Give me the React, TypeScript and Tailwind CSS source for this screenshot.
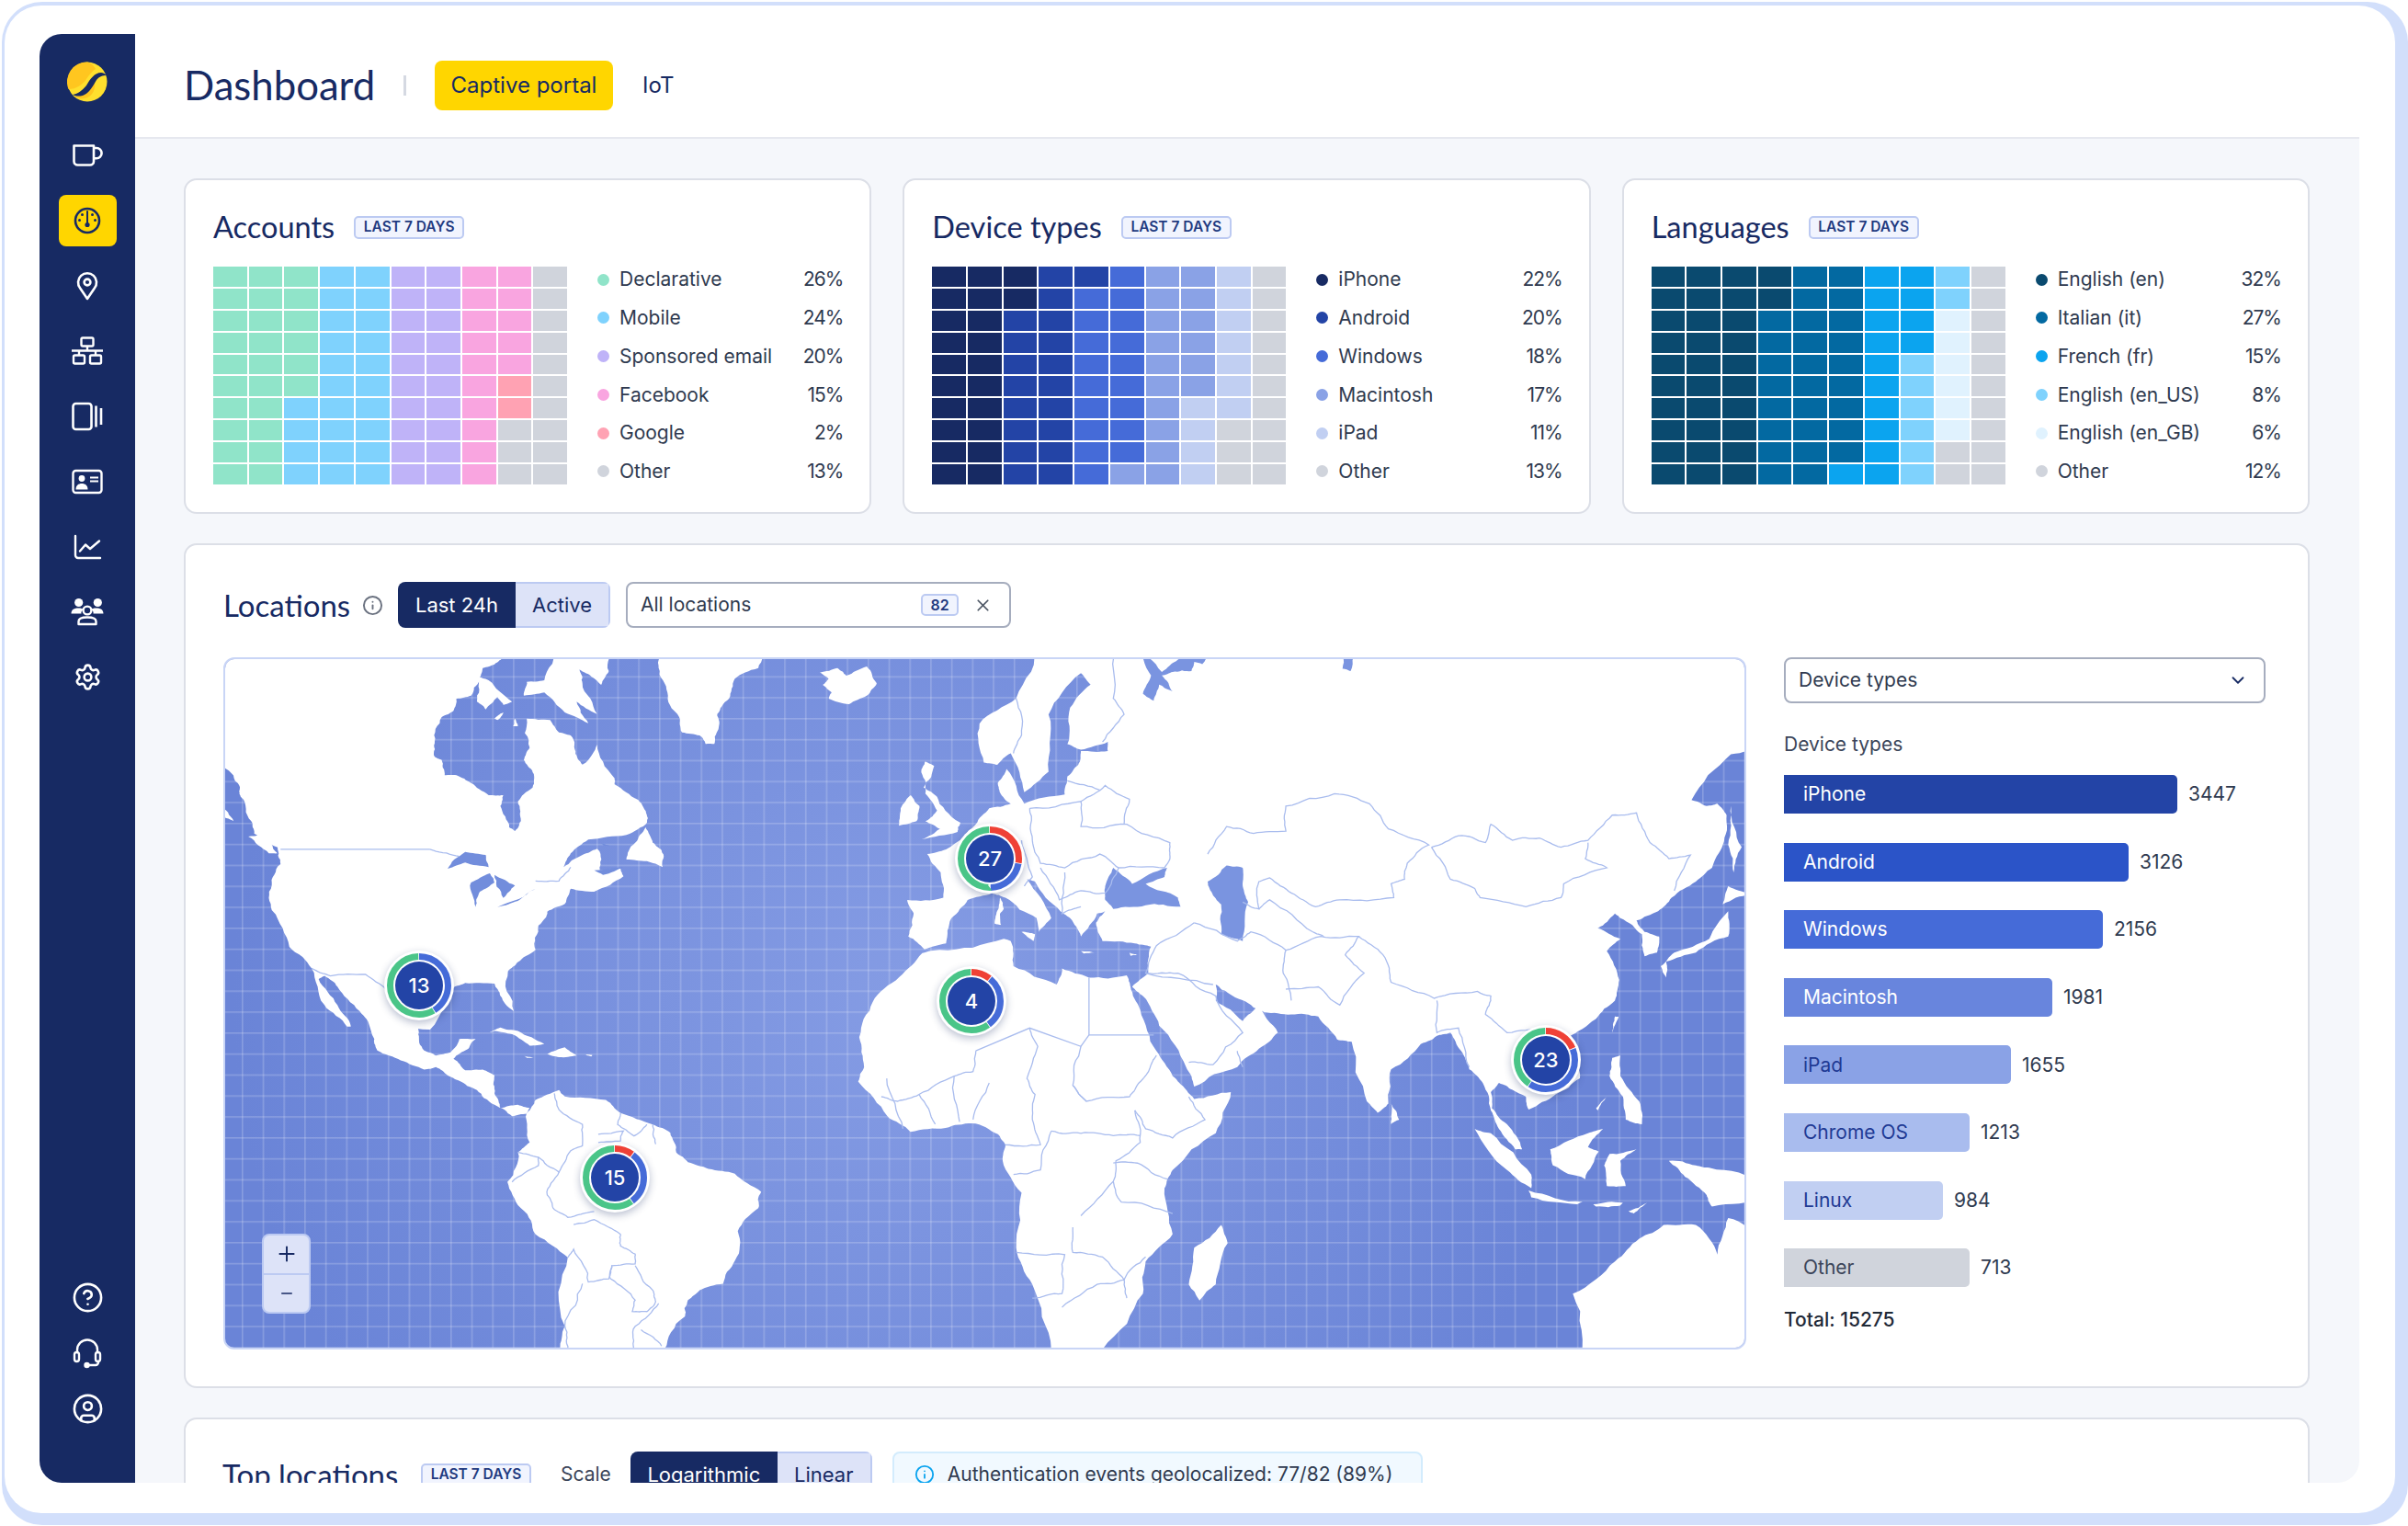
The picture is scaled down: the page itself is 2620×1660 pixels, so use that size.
import { ChevronDown, CircleHelp, CircleUser, Info, Minus, Plus, Settings, X } from "lucide-react";

type Run = [string, number];

const HEADING = "font-['Lato',sans-serif]";

function cells(runs: Run[]) {
  return runs.flatMap(([color, count]) => Array.from({ length: count }, () => color));
}

const accounts = {
  title: "Accounts",
  runs: [
    ["bg-[#90e4c9]", 26],
    ["bg-[#7fd2fd]", 24],
    ["bg-[#bfb3f8]", 20],
    ["bg-[#f9a5e0]", 15],
    ["bg-[#ffa2b3]", 2],
    ["bg-[#d0d4dc]", 13],
  ] as Run[],
  legend: [
    ["Declarative", "26%", "bg-[#90e4c9]"],
    ["Mobile", "24%", "bg-[#7fd2fd]"],
    ["Sponsored email", "20%", "bg-[#bfb3f8]"],
    ["Facebook", "15%", "bg-[#f9a5e0]"],
    ["Google", "2%", "bg-[#ffa2b3]"],
    ["Other", "13%", "bg-[#d0d4dc]"],
  ],
};

const deviceTypes = {
  title: "Device types",
  runs: [
    ["bg-[#172a63]", 22],
    ["bg-[#2344a6]", 19],
    ["bg-[#456bd8]", 18],
    ["bg-[#8aa2e6]", 17],
    ["bg-[#c1cff2]", 11],
    ["bg-[#d0d4dc]", 13],
  ] as Run[],
  legend: [
    ["iPhone", "22%", "bg-[#172a63]"],
    ["Android", "20%", "bg-[#2344a6]"],
    ["Windows", "18%", "bg-[#456bd8]"],
    ["Macintosh", "17%", "bg-[#8aa2e6]"],
    ["iPad", "11%", "bg-[#c1cff2]"],
    ["Other", "13%", "bg-[#d0d4dc]"],
  ],
};

const languages = {
  title: "Languages",
  runs: [
    ["bg-[#0a4a6f]", 32],
    ["bg-[#0369a1]", 27],
    ["bg-[#0ba4ef]", 15],
    ["bg-[#7fd2fd]", 8],
    ["bg-[#e0f2fe]", 6],
    ["bg-[#d0d4dc]", 12],
  ] as Run[],
  legend: [
    ["English (en)", "32%", "bg-[#0a4a6f]"],
    ["Italian (it)", "27%", "bg-[#0369a1]"],
    ["French (fr)", "15%", "bg-[#0ba4ef]"],
    ["English (en_US)", "8%", "bg-[#7fd2fd]"],
    ["English (en_GB)", "6%", "bg-[#e0f2fe]"],
    ["Other", "12%", "bg-[#d0d4dc]"],
  ],
};

const bars = [
  { name: "iPhone", value: 3447, cls: "w-[428px] bg-[#2344a6] text-white" },
  { name: "Android", value: 3126, cls: "w-[375px] bg-[#2b54c8] text-white" },
  { name: "Windows", value: 2156, cls: "w-[347px] bg-[#456bd8] text-white" },
  { name: "Macintosh", value: 1981, cls: "w-[292px] bg-[#6885dd] text-white" },
  { name: "iPad", value: 1655, cls: "w-[247px] bg-[#8aa2e6] text-[#1f3a94]" },
  { name: "Chrome OS", value: 1213, cls: "w-[202px] bg-[#a9bcee] text-[#1f3a94]" },
  { name: "Linux", value: 984, cls: "w-[173px] bg-[#c1cff2] text-[#1f3a94]" },
  { name: "Other", value: 713, cls: "w-[202px] bg-[#d0d4dc] text-[#3b4559]" },
];

// land traced over three crops of the map, each with its own scale
const z3Land = [
  "20,300 560,300 548,345 530,368 510,380 505,420 490,470 465,480 460,520 440,540 428,620 428,670 440,680 445,730 465,730 490,755 520,795 545,795 540,830 555,900 565,912 575,880 570,815 595,770 595,720 580,680 590,640 585,545 625,550 640,590 660,600 668,660 680,695 705,630 735,740 735,760 775,810 790,860 790,885 755,925 690,940 660,985 648,1030 680,990 705,970 710,1040 745,1035 750,1060 700,1110 660,1100 650,1150 620,1175 605,1220 600,1300 570,1340 553,1370 563,1500 540,1450 530,1410 480,1408 462,1420 420,1560 320,1560 300,1500 262,1420 240,1385 230,1395 262,1480 285,1550 278,1550 240,1480 218,1360 180,1290 150,1170 150,1090 165,1020 160,965 120,920 115,880 97,800 95,765 67,700 20,680",
  "60,825 85,880 60,860",
  "110,930 130,925 160,985 145,985",
  "505,410 520,420 560,490 545,500 535,475 515,515 500,490",
  "530,545 545,525 535,550",
  "565,545 570,570 562,570",
  "630,310 735,310 725,390 712,435 690,400 675,385 680,430 705,530 670,490 690,560 650,525 615,460 580,470 585,425 615,420",
  "805,310 1005,310 980,380 940,415 930,480 910,530 912,580 905,628 890,628 880,600 850,590 845,540 825,460 810,380",
  "1085,395 1115,380 1130,405 1165,375 1182,430 1165,470 1135,498 1100,480 1105,460 1090,435 1100,415",
  "788,900 800,950 815,975 817,1030 790,1010 755,1005 770,950",
  "1265,685 1280,700 1262,770 1285,800 1325,885 1320,915 1258,940 1290,905 1265,880 1285,845 1265,790 1258,720",
  "1240,795 1255,830 1250,880 1220,895 1225,830",
];

const z3Lakes = [
  "450,1035 480,980 515,990 520,1030 480,1015",
  "490,1080 522,1050 530,1080 505,1110 498,1160",
  "530,1055 565,1090 545,1130",
  "535,1160 600,1100 570,1140",
  "710,950 732,962 716,960",
  "700,1040 750,1030 715,1055",
];

const z3Lines = [
  "600,1075 640,1075 660,1030",
  "218,1360 250,1385 310,1380 345,1430",
];

const z7Land = [
  "300,-20 400,-20 395,30 400,70 410,120 430,135 455,125 470,85 498,85 485,115 460,145 480,180 510,178 530,195 530,250 540,295 570,285 590,295 585,312 560,320 530,285 500,240 470,212 450,195 430,170 410,178 370,150 330,120 325,85",
  "520,65 540,50 570,60 615,100 590,105 560,70 530,60",
  "620,130 650,110 670,135 640,140",
  "685,132 697,134 695,138",
  "580,135 597,142 585,142",
  "585,310 600,270 640,240 650,260 720,270 745,310 800,345 830,370 840,430 860,460 895,480 940,495 985,550 980,600 945,670 940,760 920,830 880,850 860,880 855,930 820,1030 815,1070 642,1070 642,1030 650,960 655,750 600,680 575,600 552,520 570,430 590,400",
];

const z7Lines = [
  "632,250 640,300 680,345 680,410 660,425 640,490 605,445 570,430",
  "745,310 740,345 768,380 790,345",
  "707,375 750,365 745,395 707,400",
  "800,345 805,405",
  "605,445 605,470 560,520",
  "640,490 620,560 630,600 655,628 700,610",
  "665,650 700,635 745,680 745,715 770,740 770,770 730,775 725,815 690,825 665,725 655,750",
  "730,775 728,815 770,880 765,915 790,915 805,885 800,850 770,775",
  "680,830 650,960 655,1030",
  "810,890 770,960 768,1030",
  "780,970 815,1020",
];

const z8Land = [
  "225,0 1570,0 1570,235 1505,242 1432,342 1460,355 1480,350 1497,375 1490,440 1470,490 1440,520 1395,555 1370,585 1330,605 1345,630 1372,640 1368,675 1345,683 1340,635 1300,600 1290,590 1258,622 1300,645 1275,672 1298,735 1290,780 1255,820 1225,845 1195,870 1225,895 1225,950 1180,985 1130,1018 1125,990 1100,975 1075,960 1060,980 1062,1015 1090,1050 1118,1105 1105,1105 1075,1060 1060,1020 1045,960 1020,930 1005,890 985,850 965,855 930,875 875,930 870,1005 850,1025 830,1000 802,870 775,865 740,815 690,810 640,805 620,795 575,765 550,745 550,780 600,825 630,790 665,850 630,885 590,925 510,968 495,925 445,835 415,770 395,750 425,720 430,662 400,655 340,650 328,610 345,585 330,590 300,640 280,600 262,585 215,520 200,515 245,600 222,630 218,600 160,555 135,545 90,560 60,600 50,655 10,668 -20,640 -10,590 -22,560 45,555 40,500 15,460 50,450 105,395 130,360 170,350 152,330 146,304 162,274 195,350 270,330 275,290 295,265 300,235 350,235 350,215 300,232 275,220 280,140 318,90 300,65 240,155 240,280 195,325 170,240 145,265 120,260 112,175 180,120",
  "-111,860 -102,925 -113,957 -59,1032 -16,1067 49,1058 98,1048 146,1072 160,1095 155,1130 190,1200 180,1320 210,1400 245,1542 255,1580 335,1580 340,1542 415,1420 420,1350 470,1290 455,1190 470,1150 550,1070 578,980 510,995 495,975 470,945 440,890 410,800 392,750 385,725 315,730 265,710 255,745 175,705 170,650 157,645 38,669 6,676 -37,729 -86,783",
  "560,1270 572,1310 550,1400 520,1435 500,1400 510,1320",
  "1240,1580 1212,1420 1290,1350 1335,1300 1380,1270 1440,1270 1480,1335 1500,1255 1570,1290 1570,1580",
  "1390,1130 1440,1140 1465,1145 1570,1180 1570,1210 1470,1230 1460,1205 1420,1165",
  "1030,1060 1060,1070 1135,1160 1135,1190 1090,1150",
  "1130,1195 1230,1220 1220,1225 1135,1210",
  "1250,1225 1305,1222 1300,1228 1255,1230",
  "1315,1240 1350,1222 1325,1245",
  "1170,1105 1240,1070 1268,1060 1240,1100 1260,1110 1235,1170 1175,1140",
  "1280,1115 1330,1105 1300,1130 1310,1185 1275,1185 1270,1140",
  "1285,905 1300,900 1300,945 1335,1000 1340,1050 1310,1040 1305,990 1280,945",
  "1255,1015 1275,990 1258,1020",
  "1290,815 1297,815 1285,850",
  "875,1005 890,1040 875,1050",
  "1500,585 1500,640 1440,675 1385,695 1385,730 1375,705 1400,675 1465,645",
  "1500,530 1540,545 1490,570",
  "1505,355 1525,445 1510,500 1500,440",
  "150,555 157,580 150,590 152,615 140,612 147,580",
  "190,630 215,635 212,650",
  "300,672 325,675 305,677",
  "390,675 405,680 392,682",
];

const z8Seas = [
  "360,490 395,525 460,490 455,510 420,525 480,555 485,575 420,572 360,580 345,560 345,530",
  "535,520 570,485 600,490 600,530 610,565 600,650 560,635 560,570 545,550",
  "400,0 450,62 480,35 510,0 550,0 525,45 510,40 505,60 470,62 450,70 470,105 445,90 435,125 415,110 430,70",
  "785,55 800,60 815,0 790,0",
];

const z8Lines = [
  "950,445 1000,420 1050,435 1060,395 1100,430 1150,425 1190,445 1240,430 1285,375 1330,370 1355,435 1390,470 1430,462 1400,540",
  "950,445 985,515 1030,535 1040,555 1125,575 1190,555 1195,525 1275,490 1235,470 1240,435",
  "535,460 570,400 620,415 680,410 680,355 770,328 835,350 870,405 945,440 905,480 900,515 875,525 880,555 780,560 735,575 690,545 650,512 630,520 630,580 600,565",
  "630,580 650,560 730,630 750,640",
  "510,610 590,650 615,630 680,670 675,720 690,780",
  "680,670 745,640 815,640 790,680 825,720 780,790 740,750 680,755",
  "815,640 860,680 875,740 955,775 1035,760 1060,770 1050,810 1090,850 1160,840",
  "960,780 960,850 1000,840 1020,925",
  "510,610 440,660 420,720 545,745",
  "420,720 480,720 550,770 600,850 545,920 500,915",
  "590,890 600,925",
  "205,360 300,345 300,400 385,395 465,435 465,470 455,490 370,490 335,460 270,490 225,480 210,430 205,360",
  "380,395 390,340 345,310 300,345",
  "275,300 335,320",
  "365,0 360,120 380,155 340,215",
  "180,120 190,200 175,240",
  "225,490 260,560 300,540 345,545 370,490",
  "270,500 265,590 300,575",
  "190,430 210,510 195,530",
  "300,880 285,965 310,1000",
  "105,890 100,935 65,945 0,985 -40,1000 -70,990",
  "205,840 220,880 200,950 215,985 210,1040 225,1095 160,1095",
  "285,965 310,1000 390,990 400,975 430,920 440,900",
  "400,1020 420,1060 470,1080 530,1040 500,990",
  "400,1020 410,1090 365,1130 360,1175 300,1250",
  "245,1065 225,1150 175,1160",
  "245,1065 300,1070 360,1075 410,1075",
  "360,1135 405,1135 460,1170",
  "360,1175 375,1220 470,1245",
  "180,1330 270,1335 265,1420 210,1430",
  "285,1275 285,1330 340,1340 380,1390 420,1340",
  "265,1450 330,1400 380,1390 385,1430",
  "0,985 30,1050",
  "65,945 75,1045",
  "130,960 100,1040",
  "-60,950 -30,1060",
];

// these borders run dead straight in the picture
const z8Straight = ["105,890 205,840 300,880 315,855 315,730", "315,855 435,855"];

// breaks up the straight edges so coasts and borders read as traced
function rough(points: string, closed: boolean) {
  let pts = points.split(" ").map((p) => p.split(",").map(Number));
  for (let pass = 0; pass < 3; pass++) {
    const next: number[][] = [];
    pts.forEach((a, i) => {
      next.push(a);
      const b = pts[i + 1] ?? (closed ? pts[0] : null);
      if (!b) return;
      const dx = b[0] - a[0];
      const dy = b[1] - a[1];
      const seed = Math.sin((a[0] + b[0]) * 12.9898 + (a[1] + b[1]) * 78.233) * 43758.5453;
      const k = (seed - Math.floor(seed) - 0.5) * 0.14;
      next.push([(a[0] + b[0]) / 2 - dy * k, (a[1] + b[1]) / 2 + dx * k]);
    });
    pts = next;
  }
  return pts.map((p) => `${p[0].toFixed(1)},${p[1].toFixed(1)}`).join(" ");
}

const markers = [
  { label: 27, cls: "left-[794px] top-[179px]", red: 100, blue: 180 },
  { label: 13, cls: "left-[173px] top-[317px]", red: 0, blue: 150 },
  { label: 4, cls: "left-[774px] top-[334px]", red: 40, blue: 145 },
  { label: 23, cls: "left-[1399px] top-[398px]", red: 68, blue: 215 },
  { label: 15, cls: "left-[386px] top-[526px]", red: 38, blue: 145 },
];

function Arc({ from, to, color }: { from: number; to: number; color: string }) {
  if (to <= from) return null;
  return (
    <circle
      cx="38"
      cy="38"
      r="31.5"
      fill="none"
      stroke={color}
      strokeWidth="7"
      pathLength={360}
      strokeDasharray={`${to - from - 1.5} 360`}
      strokeDashoffset={-from}
      transform="rotate(-90 38 38)"
    />
  );
}

function Marker({ label, cls, red, blue }: { label: number; cls: string; red: number; blue: number }) {
  return (
    <div className={`absolute flex h-[76px] w-[76px] items-center justify-center rounded-full bg-white shadow-[0_3px_8px_rgba(23,42,99,0.3)] ${cls}`}>
      <svg viewBox="0 0 76 76" className="absolute inset-0 h-full w-full">
        <Arc from={0} to={red} color="#ef4136" />
        <Arc from={red} to={blue} color="#456bd8" />
        <Arc from={blue} to={360} color="#4ac588" />
        <circle cx="38" cy="38" r="26" fill="#2344a6" />
      </svg>
      <span className="relative text-[22px] font-medium text-white">{label}</span>
    </div>
  );
}

function BorderLines({ items, straight }: { items: string[]; straight?: boolean }) {
  return (
    <>
      {items.map((p) => (
        <polyline
          key={p}
          points={straight ? p : rough(p, false)}
          fill="none"
          stroke="#a9bcee"
          strokeWidth="1.3"
          vectorEffect="non-scaling-stroke"
        />
      ))}
    </>
  );
}

function Shapes({ items, fill }: { items: string[]; fill: string }) {
  return (
    <>
      {items.map((p) => (
        <polygon key={p} points={rough(p, true)} fill={fill} />
      ))}
    </>
  );
}

function WorldMap() {
  return (
    <svg viewBox="245 717 1653 749" className="block h-full w-full">
      <defs>
        <pattern id="grid" x="263" y="1123" width="22.7" height="22.8" patternUnits="userSpaceOnUse">
          <rect width="1.6" height="22.8" fill="#ffffff" fillOpacity="0.2" />
          <rect width="22.7" height="1.6" fill="#ffffff" fillOpacity="0.2" />
        </pattern>
      </defs>
      <rect x="245" y="717" width="1653" height="749" fill="url(#grid)" />
      <g transform="translate(200 600) scale(0.6378 0.3333)">
        <Shapes items={z3Land} fill="#ffffff" />
        <Shapes items={z3Lakes} fill="#728ddc" />
        <BorderLines items={z3Lines} />
        <BorderLines items={["165,972 420,972"]} straight />
        <BorderLines items={["420,972 425,975 470,995"]} />
      </g>
      <g transform="translate(200 1100) scale(0.6378 0.3571)">
        <Shapes items={z7Land} fill="#ffffff" />
        <BorderLines items={z7Lines} />
      </g>
      <g transform="translate(1000 700) scale(0.5869 0.498)">
        <Shapes items={z8Land} fill="#ffffff" />
        <Shapes items={z8Seas} fill="#7a94e0" />
        <BorderLines items={z8Lines} />
        <BorderLines items={z8Straight} straight />
      </g>
    </svg>
  );
}

function Logo() {
  return (
    <svg viewBox="0 0 44 44" className="h-[44px] w-[44px]">
      <circle cx="22" cy="22" r="21.5" fill="#ffe02e" />
      <path d="M22 .5 A21.5 21.5 0 0 0 1.5 30 C10 30 17 25 21 19 C24 14 28 10 31 8 C28 3 25 1 22 .5 Z" fill="#ffc61f" />
      <path d="M8 38 C17 43 28 40 30 28 C30.5 24 30 22 29 20 C26 26 22 33 16 36 Z" fill="#ffc61f" />
      <path d="M6 36 C12 35 17 31 21 26 C25 19 30 12 37 12 C39 12 41 13 43 15 C39 15 35 16 32 20 C29 25 25 33 19 36 C15 38 10 38 6 36 Z" fill="#172a63" />
    </svg>
  );
}

function MugIcon() {
  return (
    <svg viewBox="0 0 36 36" fill="none" stroke="white" strokeWidth="2.6" strokeLinejoin="round" className="h-9 w-9">
      <path d="M3.5 7.5 H25 V24.5 a4 4 0 0 1-4 4 H7.5 a4 4 0 0 1-4-4 Z" />
      <path d="M25 10 h3 a5.6 5.6 0 0 1 0 11.2 h-3" />
    </svg>
  );
}

function GaugeIcon() {
  return (
    <svg viewBox="0 0 36 36" className="h-9 w-9">
      <circle cx="18" cy="18" r="13" fill="none" stroke="#172a63" strokeWidth="2.6" />
      <path d="M18 8 V21" stroke="#172a63" strokeWidth="2" strokeLinecap="round" />
      <circle cx="18" cy="22.5" r="2.6" fill="#172a63" />
      <circle cx="12.5" cy="11.5" r="1.5" fill="#172a63" />
      <circle cx="23.5" cy="11.5" r="1.5" fill="#172a63" />
      <circle cx="9.5" cy="17.5" r="1.5" fill="#172a63" />
      <circle cx="26.5" cy="17.5" r="1.5" fill="#172a63" />
    </svg>
  );
}

function PinIcon() {
  return (
    <svg viewBox="0 0 36 36" fill="none" stroke="white" strokeWidth="2.6" strokeLinejoin="round" className="h-9 w-9">
      <path d="M18 32 L10.2 20.5 A10 10 0 1 1 25.8 20.5 Z" />
      <circle cx="18" cy="14" r="3.4" />
    </svg>
  );
}

function NetworkIcon() {
  return (
    <svg viewBox="0 0 36 36" fill="none" stroke="white" strokeWidth="2.4" strokeLinejoin="round" className="h-9 w-9">
      <rect x="11.5" y="3.5" width="13" height="9" rx="1.5" />
      <path d="M1 17.5 H35 M18 12.5 V17.5 M9 17.5 V22.5 M27 17.5 V22.5" />
      <rect x="3" y="22.5" width="12" height="9" rx="1.5" />
      <rect x="21" y="22.5" width="12" height="9" rx="1.5" />
    </svg>
  );
}

function DeviceIcon() {
  return (
    <svg viewBox="0 0 36 36" fill="none" stroke="white" strokeWidth="2.6" className="h-9 w-9">
      <rect x="2.5" y="4" width="20" height="28" rx="3" />
      <path d="M27.5 6.5 V29.5 M33 9 V27" />
    </svg>
  );
}

function IdCardIcon() {
  return (
    <svg viewBox="0 0 36 36" className="h-9 w-9">
      <rect x="2.5" y="6" width="31" height="24" rx="3" fill="none" stroke="white" strokeWidth="2.4" />
      <circle cx="12" cy="14.5" r="3.4" fill="white" />
      <path d="M5.5 26.5 C5.5 22 8.5 20 12 20 C15.5 20 18.5 22 18.5 26.5 Z" fill="white" />
      <path d="M21 13.5 H30 M21 17.5 H30" stroke="white" strokeWidth="2.2" />
    </svg>
  );
}

function ChartIcon() {
  return (
    <svg viewBox="0 0 36 36" fill="none" stroke="white" strokeWidth="2.4" strokeLinecap="round" strokeLinejoin="round" className="h-9 w-9">
      <path d="M5 6 V27 a3 3 0 0 0 3 3 H32" />
      <path d="M10 22.5 L16 15.5 L21 20 L31 11.5" />
    </svg>
  );
}

function UsersIcon() {
  return (
    <svg viewBox="0 0 36 36" className="h-9 w-9">
      <circle cx="8.7" cy="7.5" r="4.6" fill="white" />
      <circle cx="29.3" cy="7.5" r="4.6" fill="white" />
      <path d="M0.5 19.5 C0.5 15 4 13.5 8.5 13.5 C11 13.5 13 14 14 15 C12 16 11 18 11.5 19.5 Z" fill="white" />
      <path d="M35.5 19.5 C35.5 15 32 13.5 27.5 13.5 C25 13.5 23 14 22 15 C24 16 25 18 24.5 19.5 Z" fill="white" />
      <circle cx="18" cy="16" r="4.4" fill="none" stroke="white" strokeWidth="2.4" />
      <path d="M8.5 31 V28 C8.5 25 12 23.5 18 23.5 C24 23.5 27.5 25 27.5 28 V31 Z" fill="none" stroke="white" strokeWidth="2.4" strokeLinejoin="round" />
    </svg>
  );
}

function HeadsetIcon() {
  return (
    <svg viewBox="0 0 36 36" fill="none" stroke="white" strokeWidth="2.4" strokeLinecap="round" strokeLinejoin="round" className="h-9 w-9">
      <path d="M7 17 V14.5 a11 11 0 0 1 22 0 V17" />
      <rect x="4" y="17" width="5" height="10" rx="2.5" />
      <rect x="27" y="17" width="5" height="10" rx="2.5" />
      <path d="M30 27 V28 a3 3 0 0 1-3 3 H20" />
      <circle cx="17.5" cy="31" r="2" fill="white" />
    </svg>
  );
}

function NavItem({ children, active }: { children: React.ReactNode; active?: boolean }) {
  return (
    <div className="flex h-[71px] items-center justify-center">
      {active ? (
        <div className="flex h-[56px] w-[63px] items-center justify-center rounded-[8px] bg-[#ffd600]">{children}</div>
      ) : (
        children
      )}
    </div>
  );
}

function Badge() {
  return (
    <span className="flex h-[25px] w-[120px] shrink-0 items-center justify-center rounded-[5px] border-2 border-[#bccaf2] bg-[#f1f4fe] text-[15.5px] font-semibold text-[#1f3a80]">
      LAST 7 DAYS
    </span>
  );
}

function WaffleCard({ data }: { data: typeof accounts }) {
  return (
    <div className="h-[365px] flex-1 rounded-[14px] border-2 border-[#dcdfe7] bg-white pl-[30px] pr-[29px] pt-[35px]">
      {/* Title */}
      <div className="flex h-[32px] items-center gap-[21px]">
        <h2 className={`text-[32.5px] leading-none text-[#172a63] ${HEADING}`}>{data.title}</h2>
        <Badge />
      </div>

      <div className="mt-[27px] flex">
        {/* Waffle */}
        <div className="grid h-[237px] w-[385px] shrink-0 grid-flow-col grid-cols-10 grid-rows-10 gap-[2px]">
          {cells(data.runs).map((color, i) => (
            <div key={i} className={color} />
          ))}
        </div>

        {/* Legend */}
        <div className="ml-[33px] flex flex-1 flex-col justify-between">
          {data.legend.map(([name, pct, color]) => (
            <div key={name} className="flex h-[28px] items-center text-[21px] text-[#2f3a4f]">
              <span className={`mr-[11px] h-[13px] w-[13px] rounded-full ${color}`} />
              <span className="flex-1">{name}</span>
              <span className="tracking-[-1px]">{pct}</span>
            </div>
          ))}
        </div>
      </div>
    </div>
  );
}

export default function App() {
  return (
    <div className="h-[1660px] w-[2620px] overflow-hidden bg-white pl-[2px] pt-[2px] font-['Inter',sans-serif]">
      <div className="h-[1657px] w-[2618px] rounded-[44px] bg-[#d2dffb] pb-[13px] pl-[3px] pr-[14px] pt-[4px]">
        <div className="flex h-full rounded-[40px] bg-white pb-[33px] pl-[38px] pr-[39px] pt-[31px]">
          {/* Sidebar */}
          <aside className="flex w-[104px] shrink-0 flex-col items-stretch rounded-l-[24px] bg-[#172a63] pb-[63px]">
            <div className="flex h-[96px] items-center justify-center pt-[8px]">
              <Logo />
            </div>
            <NavItem><MugIcon /></NavItem>
            <NavItem active><GaugeIcon /></NavItem>
            <NavItem><PinIcon /></NavItem>
            <NavItem><NetworkIcon /></NavItem>
            <NavItem><DeviceIcon /></NavItem>
            <NavItem><IdCardIcon /></NavItem>
            <NavItem><ChartIcon /></NavItem>
            <NavItem><UsersIcon /></NavItem>
            <NavItem><Settings size={31} color="white" strokeWidth={2} /></NavItem>
            <div className="mt-auto flex flex-col items-center gap-[25px]">
              <CircleHelp size={35} color="white" strokeWidth={1.8} />
              <HeadsetIcon />
              <CircleUser size={35} color="white" strokeWidth={1.8} />
            </div>
          </aside>

          <div className="flex min-w-0 flex-1 flex-col overflow-hidden">
            {/* Header */}
            <header className="flex h-[114px] shrink-0 items-center border-b-2 border-[#e6e8ef] bg-white pl-[53px]">
              <h1 className={`w-[207px] whitespace-nowrap text-[43.7px] leading-none text-[#172a63] ${HEADING}`}>Dashboard</h1>
              <span className="ml-[32px] h-[22px] w-[3px] bg-[#d5d9e2]" />
              <button className="ml-[31px] flex h-[54px] w-[194px] items-center justify-center rounded-[8px] bg-[#ffd600] text-[24px] text-[#172a63]">
                Captive portal
              </button>
              <span className="ml-[32px] text-[24px] text-[#172a63]">IoT</span>
            </header>

            {/* Content */}
            <main className="flex flex-1 flex-col gap-[32px] overflow-hidden rounded-br-[24px] bg-[#f5f7fb] pl-[53px] pr-[54px] pt-[43px]">
              <div className="flex shrink-0 gap-[34px]">
                <WaffleCard data={accounts} />
                <WaffleCard data={deviceTypes} />
                <WaffleCard data={languages} />
              </div>

              {/* Locations */}
              <section className="h-[919px] shrink-0 rounded-[14px] border-2 border-[#dcdfe7] bg-white pl-[41px] pr-[46px] pt-[40px]">
                <div className="flex h-[50px] items-center">
                  <h2 className={`w-[151px] text-[33px] leading-none text-[#172a63] ${HEADING}`}>Locations</h2>
                  <Info size={23} className="text-[#6b7280]" />
                  <div className="ml-[16px] flex h-[50px] w-[231px] overflow-hidden rounded-[8px] text-[22px]">
                    <span className="flex w-[128px] items-center justify-center bg-[#172a63] text-white">Last 24h</span>
                    <span className="flex flex-1 items-center justify-center border-2 border-l-0 border-[#bccaf2] bg-[#dde3f8] text-[#172a63]">Active</span>
                  </div>
                  <div className="ml-[17px] flex h-[50px] w-[419px] items-center rounded-[8px] border-2 border-[#a6adbe] pl-[14px] pr-[18px] text-[21px] text-[#2f3a4f]">
                    <span className="flex-1">All locations</span>
                    <span className="flex h-[24px] w-[41px] items-center justify-center rounded-[5px] border-2 border-[#bccaf2] bg-[#f1f4fe] text-[16px] font-semibold text-[#1f3a80]">82</span>
                    <X size={21} className="ml-[16px] text-[#4b5563]" />
                  </div>
                </div>

                <div className="mt-[32px] flex gap-[41px]">
                  {/* Map */}
                  <div className="relative h-[753px] w-[1657px] shrink-0 overflow-hidden rounded-[12px] border-2 border-[#c9d5f6] bg-[radial-gradient(circle_at_45%_50%,#859ce4,#6a84d7_75%)]">
                    <WorldMap />
                    {markers.map((m) => (
                      <Marker key={m.label} {...m} />
                    ))}
                    <div className="absolute left-[40px] top-[625px] flex h-[87px] w-[53px] flex-col overflow-hidden rounded-[8px] border-2 border-[#bccaf2] bg-[#dde3f8] text-[#172a63]">
                      <span className="flex flex-1 items-center justify-center border-b-2 border-[#bccaf2]"><Plus size={26} strokeWidth={1.8} /></span>
                      <span className="flex flex-1 items-center justify-center"><Minus size={18} strokeWidth={2} /></span>
                    </div>
                  </div>

                  {/* Device types breakdown */}
                  <div className="flex-1">
                    <div className="flex h-[50px] items-center justify-between rounded-[8px] border-2 border-[#a6adbe] pl-[14px] pr-[17px] text-[21px] text-[#2f3a4f]">
                      Device types
                      <ChevronDown size={22} className="text-[#172a63]" />
                    </div>
                    <p className="mt-[32px] text-[21px] leading-[25px] text-[#3b4559]">Device types</p>
                    <div className="mt-[21px] flex flex-col gap-[31.6px]">
                      {bars.map((b) => (
                        <div key={b.name} className="flex items-center">
                          <div className={`flex h-[42px] items-center rounded-r-[5px] pl-[21px] text-[21px] ${b.cls}`}>{b.name}</div>
                          <span className="ml-[12px] text-[21px] text-[#2f3a4f]">{b.value}</span>
                        </div>
                      ))}
                    </div>
                    <p className="mt-[23px] text-[21px] font-medium leading-[25px] text-[#1f2937]">Total: 15275</p>
                  </div>
                </div>
              </section>

              {/* Top locations (cut off by the frame) */}
              <section className="flex h-[200px] shrink-0 items-start rounded-[14px] border-2 border-[#dcdfe7] bg-white pl-[40px] pt-[35px]">
                <div className="flex h-[50px] items-center">
                  <h2 className={`w-[194px] whitespace-nowrap text-[33px] leading-none text-[#172a63] ${HEADING}`}>Top locations</h2>
                  <span className="ml-[22px]"><Badge /></span>
                  <span className="ml-[32px] text-[21px] text-[#3b4559]">Scale</span>
                  <div className="ml-[21px] flex h-[50px] w-[263px] overflow-hidden rounded-[8px] text-[22px]">
                    <span className="flex w-[160px] items-center justify-center bg-[#172a63] text-white">Logarithmic</span>
                    <span className="flex flex-1 items-center justify-center border-2 border-l-0 border-[#bccaf2] bg-[#dde3f8] text-[#172a63]">Linear</span>
                  </div>
                  <div className="ml-[22px] flex h-[50px] w-[577px] items-center rounded-[8px] border-2 border-[#d3ecfd] bg-[#f1f9ff] pl-[22px] text-[21px] text-[#2f3a4f]">
                    <Info size={22} className="mr-[14px] text-[#0ba4ef]" />
                    Authentication events geolocalized: 77/82 (89%)
                  </div>
                </div>
              </section>
            </main>
          </div>
        </div>
      </div>
    </div>
  );
}
